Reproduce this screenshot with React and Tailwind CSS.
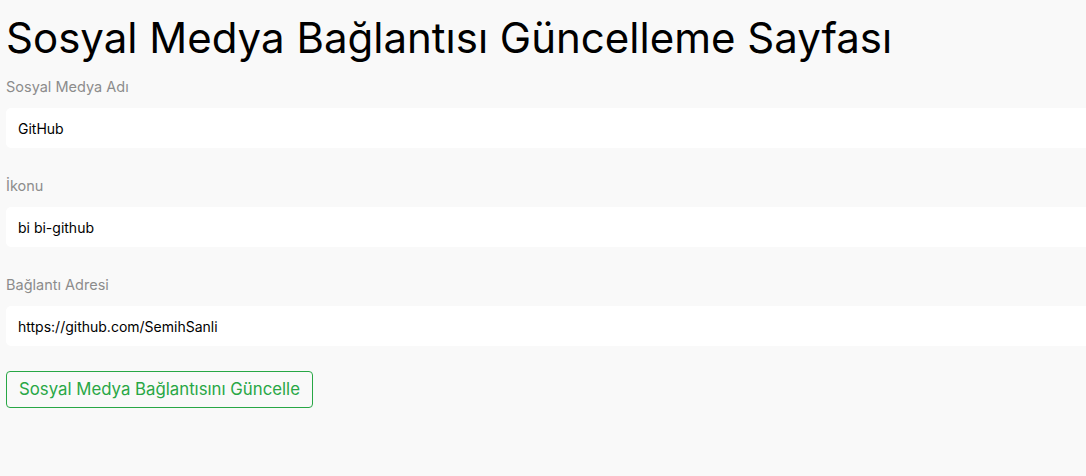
import React from "react";

const Field = ({ label, value }) => {
  return (
    <div>
      <label className="block text-[14.5px] leading-[20px] text-[#8c8c8c] mb-[11px]">{label}</label>
      <input
        type="text"
        defaultValue={value}
        className="block w-[calc(100%+20px)] h-[40px] rounded-[5px] bg-white px-3 text-[14px] text-black outline-none"
      />
    </div>
  );
};

const App = () => {
  return (
    <div
      className="min-h-[476px] w-full overflow-hidden bg-[#f9f9f9] pl-[6px]"
      style={{ fontFamily: "Inter, 'Noto Sans', sans-serif" }}
    >
      <h1 className="pt-[11px] text-[42px] leading-[54px] text-black">
        Sosyal Medya Bağlantısı Güncelleme Sayfası
      </h1>
      <div className="mt-[12px] flex flex-col gap-[28px]">
        <Field label="Sosyal Medya Adı" value="GitHub" />
        <Field label="İkonu" value="bi bi-github" />
        <Field label="Bağlantı Adresi" value="https://github.com/SemihSanli" />
      </div>
      <button className="mt-[25px] h-[37px] rounded-[4px] border border-[#28a745] px-3 text-[16.8px] text-[#28a745]">
        Sosyal Medya Bağlantısını Güncelle
      </button>
    </div>
  );
};

export default App;
